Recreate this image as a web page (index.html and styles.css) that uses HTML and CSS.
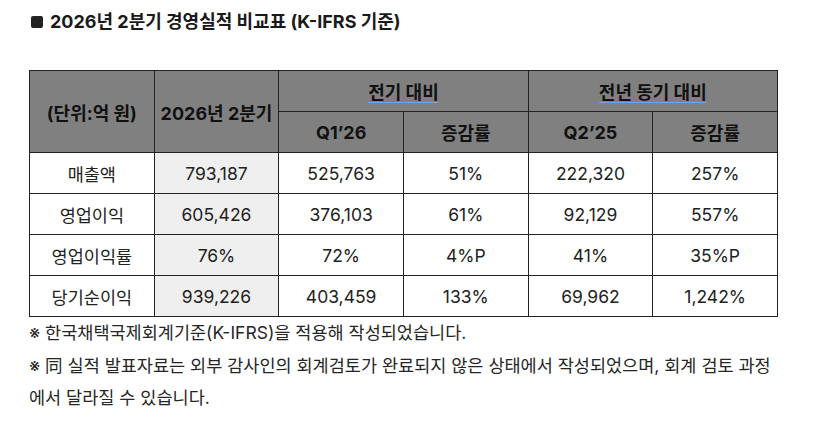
FILE: index.html
```html
<!DOCTYPE html>
<html lang="ko">
<head>
<meta charset="utf-8">
<link rel="stylesheet" href="styles.css">
</head>
<body>
<div class="page">
  <h2 class="title"><span class="bullet"></span>2026년 2분기 경영실적 비교표 (K-IFRS 기준)</h2>
  <table class="perf">
    <thead>
      <tr>
        <th rowspan="2">(단위:억 원)</th>
        <th rowspan="2">2026년 2분기</th>
        <th colspan="2"><span class="ul">전기 대비</span></th>
        <th colspan="2"><span class="ul">전년 동기 대비</span></th>
      </tr>
      <tr>
        <th>Q1’26</th>
        <th>증감률</th>
        <th>Q2’25</th>
        <th>증감률</th>
      </tr>
    </thead>
    <tbody>
      <tr><td>매출액</td><td class="hl">793,187</td><td>525,763</td><td>51%</td><td>222,320</td><td>257%</td></tr>
      <tr><td>영업이익</td><td class="hl">605,426</td><td>376,103</td><td>61%</td><td>92,129</td><td>557%</td></tr>
      <tr><td>영업이익률</td><td class="hl">76%</td><td>72%</td><td>4%P</td><td>41%</td><td>35%P</td></tr>
      <tr><td>당기순이익</td><td class="hl">939,226</td><td>403,459</td><td>133%</td><td>69,962</td><td>1,242%</td></tr>
    </tbody>
  </table>
  <div class="notes">
    <p>※ 한국채택국제회계기준(K-IFRS)을 적용해 작성되었습니다.</p>
    <p>※ 同 실적 발표자료는 외부 감사인의 회계검토가 완료되지 않은 상태에서 작성되었으며, 회계 검토 과정에서 달라질 수 있습니다.</p>
  </div>
</div>
</body>
</html>
```
FILE: styles.css
```css
html, body {
  margin: 0;
  padding: 0;
  background: #ffffff;
}
body {
  font-family: Inter, "Noto Sans CJK KR", sans-serif;
  color: #222222;
}
.page {
  width: 760px;
  padding: 10px 0 0 29px;
}
.title {
  display: flex;
  align-items: center;
  gap: 7px;
  margin: 0 0 36px 2px;
  font-size: 18px;
  line-height: 24px;
  font-weight: 700;
  color: #1a1a1a;
}
.bullet {
  width: 12px;
  height: 12px;
  border-radius: 2px;
  background: #222222;
  flex: none;
}
.perf {
  border-collapse: collapse;
  width: 749px;
  table-layout: fixed;
}
.perf th, .perf td {
  border: 1px solid #222222;
  height: 41px;
  padding: 0;
  text-align: center;
  box-sizing: border-box;
}
.perf th {
  background: #808080;
  color: #111111;
  font-weight: 700;
  font-size: 18px;
}
.perf td {
  background: #ffffff;
  color: #222222;
  font-weight: 400;
  font-size: 17.5px;
}
.perf td.hl {
  background: #efefef;
}
.ul {
  text-decoration: underline;
  text-decoration-color: #6ea6e6;
  text-decoration-thickness: 1px;
  text-underline-offset: 3px;
}
.notes {
  width: 752px;
}
.notes p {
  margin: 0;
  font-size: 17.5px;
  line-height: 32.5px;
  color: #262626;
}
```
